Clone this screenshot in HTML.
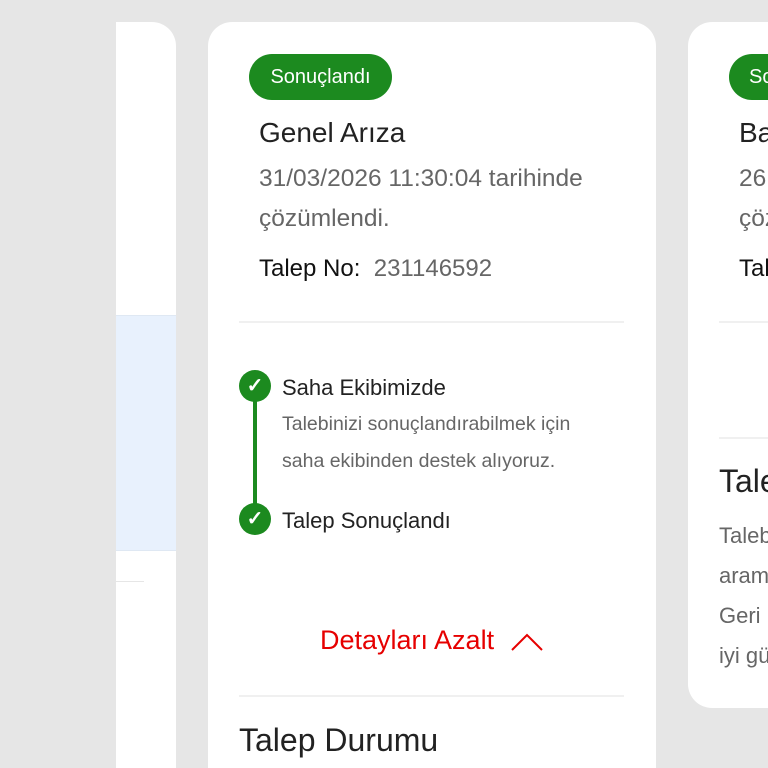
<!DOCTYPE html>
<html style="overflow:hidden;width:768px;height:768px"><head><style>
body{margin:0;width:768px;height:768px;background:#e6e6e6;position:relative;overflow:hidden;font-family:"Liberation Sans",sans-serif}
.a{position:absolute;white-space:nowrap}
.card{position:absolute;background:#fff}
.pill{position:absolute;background:#1c8a1f;color:#fff;border-radius:24px;font-size:19px;line-height:46px;height:46px}
.line{position:absolute;height:2px;background:#f0f0f0}
.chk{position:absolute;width:32px;height:32px;border-radius:50%;background:#1c8a1f;color:#fff;font-size:20px;line-height:32px;text-align:center;font-weight:bold}
</style></head><body>
<div class="card" style="left:116px;top:22px;width:60px;height:746px;border-radius:0 24px 0 0"></div>
<div class="a" style="left:116px;top:315px;width:60px;height:234px;background:#e8f1fd;border-top:1px solid #dfe8f3;border-bottom:1px solid #dfe8f3"></div>
<div class="a" style="left:116px;top:581px;width:28px;height:1px;background:#e6e6e6"></div>

<div class="card" style="left:208px;top:22px;width:448px;height:746px;border-radius:24px 24px 0 0"></div>
<div class="pill" style="left:249px;top:54px;width:143px;text-align:center;font-size:20px">Sonuçlandı</div>
<div class="a" style="left:259px;top:117px;font-size:28px;color:#222">Genel Arıza</div>
<div class="a" style="left:259px;top:165px;font-size:24.5px;color:#666">31/03/2026 11:30:04 tarihinde</div>
<div class="a" style="left:259px;top:205px;font-size:24.5px;color:#666">çözümlendi.</div>
<div class="a" style="left:259px;top:255px;font-size:24px;color:#111">Talep No:&nbsp; <span style="color:#666">231146592</span></div>
<div class="line" style="left:239px;top:321px;width:385px"></div>
<div class="a" style="left:253px;top:388px;width:4px;height:130px;background:#1c8a1f"></div>
<div class="chk" style="left:239px;top:370px">✓</div>
<div class="chk" style="left:239px;top:503px">✓</div>
<div class="a" style="left:282px;top:375px;font-size:22px;color:#222">Saha Ekibimizde</div>
<div class="a" style="left:282px;top:413px;font-size:19.5px;color:#666">Talebinizi sonuçlandırabilmek için</div>
<div class="a" style="left:282px;top:450px;font-size:19.5px;color:#666">saha ekibinden destek alıyoruz.</div>
<div class="a" style="left:282px;top:508px;font-size:22px;color:#222">Talep Sonuçlandı</div>
<div class="a" style="left:320px;top:625px;font-size:27px;color:#e60000">Detayları Azalt</div>
<svg class="a" style="left:510px;top:629px" width="34" height="24"><path d="M2 21 L17 6 L32 21" fill="none" stroke="#e60000" stroke-width="2"/></svg>
<div class="line" style="left:239px;top:695px;width:385px"></div>
<div class="a" style="left:239px;top:722px;font-size:32px;color:#222">Talep Durumu</div>

<div class="card" style="left:688px;top:22px;width:80px;height:686px;border-radius:24px 0 0 24px;overflow:hidden">
<div class="pill" style="left:41px;top:32px;width:80px;padding-left:20px;font-size:20px">Sonuçlandı</div>
<div class="a" style="left:51px;top:95px;font-size:28px;color:#222">Ba</div>
<div class="a" style="left:51px;top:143px;font-size:24.5px;color:#666">26</div>
<div class="a" style="left:51px;top:183px;font-size:24.5px;color:#666">çöz</div>
<div class="a" style="left:51px;top:233px;font-size:24px;color:#111">Tal</div>
<div class="line" style="left:31px;top:299px;width:60px"></div>
<div class="line" style="left:31px;top:415px;width:60px"></div>
<div class="a" style="left:31px;top:441px;font-size:32px;color:#222">Tale</div>
<div class="a" style="left:31px;top:494px;font-size:22px;color:#666;line-height:40px">Taleb<br>aram<br>Geri<br>iyi gü</div>
</div>
</body></html>
